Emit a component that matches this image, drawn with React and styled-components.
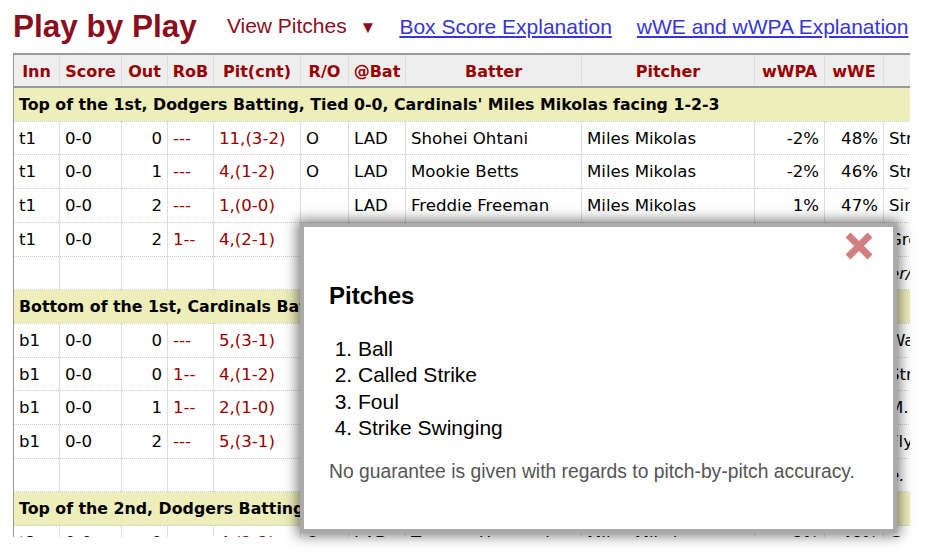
import styled, { createGlobalStyle } from "styled-components"

const GlobalStyle = createGlobalStyle`
  html, body {
    margin: 0;
    padding: 0;
    overflow: hidden;
    background: #fff;
  }
  body {
    font-family: "DejaVu Sans", Verdana, sans-serif;
  }
`

const columns = [
    { label: "Inn", width: 46, align: "left" },
    { label: "Score", width: 62, align: "left" },
    { label: "Out", width: 46, align: "right" },
    { label: "RoB", width: 46, align: "left", red: true },
    { label: "Pit(cnt)", width: 87, align: "left", red: true },
    { label: "R/O", width: 48, align: "left" },
    { label: "@Bat", width: 57, align: "left" },
    { label: "Batter", width: 176, align: "left" },
    { label: "Pitcher", width: 173, align: "left" },
    { label: "wWPA", width: 70, align: "right" },
    { label: "wWE", width: 59, align: "right" },
    { label: "Play Description", width: 420, align: "left" },
]

const innings = [
    {
        title: "Top of the 1st, Dodgers Batting, Tied 0-0, Cardinals' Miles Mikolas facing 1-2-3",
        plays: [
            ["t1", "0-0", "0", "---", "11,(3-2)", "O", "LAD", "Shohei Ohtani", "Miles Mikolas", "-2%", "48%", "Strikeout Looking"],
            ["t1", "0-0", "1", "---", "4,(1-2)", "O", "LAD", "Mookie Betts", "Miles Mikolas", "-2%", "46%", "Strikeout Swinging"],
            ["t1", "0-0", "2", "---", "1,(0-0)", "", "LAD", "Freddie Freeman", "Miles Mikolas", "1%", "47%", "Single to RF (Line Drive)"],
            ["t1", "0-0", "2", "1--", "4,(2-1)", "O", "LAD", "Will Smith", "Miles Mikolas", "-1%", "46%", "Groundout: 3B-1B"],
        ],
        summary: "er/0 runs, 1 hit, 0 errors, 1 LOB.",
    },
    {
        title: "Bottom of the 1st, Cardinals Batting, Tied 0-0, Dodgers' Tyler Glasnow facing 1-2-3",
        plays: [
            ["b1", "0-0", "0", "---", "5,(3-1)", "", "STL", "Brendan Donovan", "Tyler Glasnow", "3%", "50%", "Walk"],
            ["b1", "0-0", "0", "1--", "4,(1-2)", "O", "STL", "Masyn Winn", "Tyler Glasnow", "-4%", "46%", "Strikeout Swinging"],
            ["b1", "0-0", "1", "1--", "2,(1-0)", "O", "STL", "Alec Burleson", "Tyler Glasnow", "-3%", "43%", "M. Winn Caught Stealing 2B"],
            ["b1", "0-0", "2", "---", "5,(3-1)", "O", "STL", "Nolan Gorman", "Tyler Glasnow", "-2%", "41%", "Flyball: LF"],
        ],
        summary: "e. 0 runs, 0 hits, 0 errors, 0 LOB.",
    },
    {
        title: "Top of the 2nd, Dodgers Batting, Tied 0-0, Cardinals' Miles Mikolas facing 4-5-6",
        plays: [
            ["t2", "0-0", "0", "---", "4,(2-2)", "O", "LAD", "Teoscar Hernandez", "Miles Mikolas", "-2%", "48%", "Groundout: SS-1B"],
            ["t2", "0-0", "1", "---", "3,(1-1)", "O", "LAD", "Max Muncy", "Miles Mikolas", "-2%", "46%", "Flyball: CF"],
        ],
    },
]

const pitches = ["Ball", "Called Strike", "Foul", "Strike Swinging"]

const App = () => {
    return (
        <Page>
            <GlobalStyle />
            <TitleBar>
                <Title>Play by Play</Title>
                <PitchMenu>View Pitches <Arrow>▼</Arrow></PitchMenu>
                <HelpLink href="#">Box Score Explanation</HelpLink>
                <HelpLink href="#">wWE and wWPA Explanation</HelpLink>
            </TitleBar>

            <TableWrap>
                <Table>
                    <colgroup>
                        {columns.map((c) => <col key={c.label} style={{ width: c.width }} />)}
                    </colgroup>
                    <thead>
                        <tr>
                            {columns.map((c, i) => (
                                <Th key={c.label}>{i === columns.length - 1 ? "" : c.label}</Th>
                            ))}
                        </tr>
                    </thead>
                    <tbody>
                        {innings.map((inn) => (
                            <InningRows key={inn.title} inning={inn} />
                        ))}
                    </tbody>
                </Table>
            </TableWrap>

            <Modal>
                <CloseButton aria-label="close">
                    <svg width="30" height="28" viewBox="0 0 30 28">
                        <path d="M4 3 L26 25 M26 3 L4 25" stroke="#d27f7f" strokeWidth="7" />
                    </svg>
                </CloseButton>
                <ModalTitle>Pitches</ModalTitle>
                <PitchList>
                    {pitches.map((p) => <li key={p}>{p}</li>)}
                </PitchList>
                <Note>No guarantee is given with regards to pitch-by-pitch accuracy.</Note>
            </Modal>
        </Page>
    )
}

const InningRows = ({ inning }) => (
    <>
        <tr>
            <SectionCell colSpan={columns.length}>{inning.title}</SectionCell>
        </tr>
        {inning.plays.map((play, r) => (
            <tr key={r}>
                {play.map((val, i) => (
                    <Td key={i} $align={columns[i].align} $red={columns[i].red}>{val}</Td>
                ))}
            </tr>
        ))}
        {inning.summary && (
            <tr>
                {columns.map((c, i) => (
                    <Td key={i} $italic>{i === columns.length - 1 ? inning.summary : ""}</Td>
                ))}
            </tr>
        )}
    </>
)

export default App

// styles

const Page = styled.div`
    position: relative;
    padding: 0 13px;
    height: 552px;
`

const TitleBar = styled.div`
    display: flex;
    align-items: center;
    padding-top: 7px;
    height: 36px;
    margin-bottom: 10px;
    font-family: "Liberation Sans", Arial, sans-serif;
    white-space: nowrap;
`

const Title = styled.h1`
    margin: 0 30px 0 0;
    font-size: 31.5px;
    line-height: 36px;
    padding-top: 1px;
    font-weight: bold;
    color: #8b0e1e;
`

const PitchMenu = styled.span`
    font-size: 21px;
    line-height: 24px;
    padding-top: 3px;
    color: #8b0e1e;
    margin-right: 23px;
`

const Arrow = styled.span`
    font-size: 17px;
    margin-left: 7px;
`

const HelpLink = styled.a`
    font-size: 21px;
    line-height: 24px;
    padding-top: 3px;
    color: #3636d6;
    text-decoration: underline;
    margin-right: 25px;
`

const TableWrap = styled.div`
    width: 897px;
    height: 484px;
    overflow: hidden;
`

const Table = styled.table`
    border-collapse: collapse;
    table-layout: fixed;
    width: 1290px;
    font-size: 16.6px;
    border-left: 1px solid #999;
`

const Th = styled.th`
    background: #eee;
    color: #990000;
    font-size: 16px;
    font-weight: bold;
    text-align: center;
    padding: 7px 4px 5px;
    line-height: 19px;
    border-top: 2px solid #999;
    border-bottom: 2px solid #999;
    border-right: 1px solid #ddd;
    white-space: nowrap;
`

const SectionCell = styled.td`
    background: #eeeebb;
    font-size: 15.8px;
    font-weight: bold;
    color: #000;
    padding: 8px 5px 6px;
    line-height: 18.7px;
    border-bottom: 1px dotted #ccc;
    white-space: nowrap;
`

const Td = styled.td`
    padding: 8px 5px 6px;
    line-height: 18.7px;
    height: 18.7px;
    text-align: ${(p) => p.$align || "left"};
    color: ${(p) => (p.$red ? "#990000" : "#000")};
    font-style: ${(p) => (p.$italic ? "italic" : "normal")};
    border-bottom: 1px dotted #ccc;
    border-right: 1px solid #ddd;
    white-space: nowrap;
    overflow: hidden;
`

const Modal = styled.div`
    position: absolute;
    left: 300px;
    top: 223px;
    width: 597px;
    height: 310px;
    box-sizing: border-box;
    padding: 55px 25px 0;
    background: #fff;
    border: 4px solid #aaa;
    box-shadow: 0 0 12px 3px rgba(0, 0, 0, 0.5);
    font-family: "Liberation Sans", Arial, sans-serif;
    color: #000;
`

const CloseButton = styled.button`
    position: absolute;
    top: 5px;
    right: 19px;
    padding: 0;
    border: 0;
    background: none;
    cursor: pointer;
    line-height: 0;
`

const ModalTitle = styled.h2`
    margin: 0;
    font-size: 24px;
    line-height: 28px;
    font-weight: bold;
`

const PitchList = styled.ol`
    margin: 26px 0 0;
    padding-left: 29px;
    font-size: 21px;
    line-height: 26.3px;
`

const Note = styled.p`
    margin: 20px 0 0;
    font-size: 19.3px;
    color: #555;
`
